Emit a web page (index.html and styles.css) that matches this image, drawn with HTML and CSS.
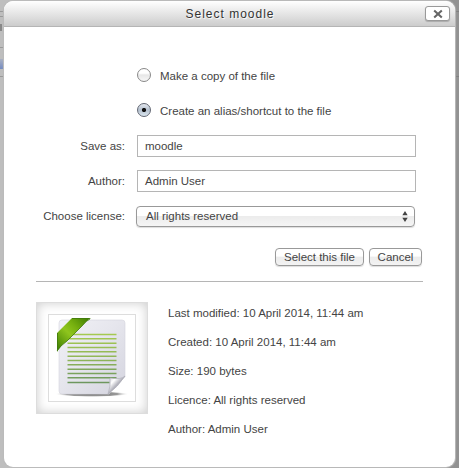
FILE: index.html
```
<!DOCTYPE html>
<html lang="en">
<head>
<meta charset="utf-8">
<title>Select moodle</title>
<link rel="stylesheet" href="styles.css">
</head>
<body>
<div class="backdrop backdrop-left"><i class="line"></i><i class="line second"></i><i class="mark"></i><i class="line third"></i><i class="band"></i><i class="line"></i></div>
<div class="backdrop backdrop-right"><i class="line"></i><i class="line fourth"></i></div>
<main class="dialog">
  <header class="header">
    <h1 class="title">Select moodle</h1>
    <button class="close" aria-label="Close"><svg width="10" height="10" viewBox="0 0 10 10"><path d="M1.2 1.5 8.8 8.5M8.8 1.5 1.2 8.5"/></svg></button>
  </header>
  <form class="form">
    <label class="choice"><span class="radio"></span><span>Make a copy of the file</span></label>
    <label class="choice"><span class="radio radio-on"></span><span>Create an alias/shortcut to the file</span></label>
    <div class="row"><span class="label">Save as:</span><div class="field">moodle</div></div>
    <div class="row"><span class="label">Author:</span><div class="field">Admin User</div></div>
    <div class="row"><span class="label">Choose license:</span><div class="select"><span>All rights reserved</span><svg width="6" height="11" viewBox="0 0 6 11"><path d="M3 0 5.7 4.3H.3ZM.3 6.7H5.7L3 11Z"/></svg></div></div>
    <div class="actions"><button type="button" class="button confirm">Select this file</button><button type="button" class="button cancel">Cancel</button></div>
  </form>
  <section class="info">
    <div class="thumb"><div class="frame">
      <svg width="86" height="86" viewBox="0 0 86 86">
        <defs>
          <linearGradient id="paper" x1="0" y1="0" x2="1" y2="1"><stop offset="0" stop-color="#f1f1f6"/><stop offset=".45" stop-color="#e6e6ed"/><stop offset="1" stop-color="#d4d4df"/></linearGradient>
          <linearGradient id="ribbon" gradientUnits="userSpaceOnUse" x1="8" y1="36" x2="41" y2="3"><stop offset="0" stop-color="#397a00"/><stop offset=".45" stop-color="#8fc51d"/><stop offset=".65" stop-color="#76b00f"/><stop offset="1" stop-color="#3b7900"/></linearGradient>
          <linearGradient id="rules" gradientUnits="userSpaceOnUse" x1="0" y1="19" x2="0" y2="69"><stop offset="0" stop-color="#a5c950"/><stop offset=".5" stop-color="#8fb558"/><stop offset="1" stop-color="#6b955f"/></linearGradient>
          <linearGradient id="curl" x1="0" y1="0" x2="1" y2="1"><stop offset="0" stop-color="#c4c4ce"/><stop offset=".3" stop-color="#fff"/><stop offset=".5" stop-color="#b4b4bd"/></linearGradient>
          <radialGradient id="shade"><stop offset="0" stop-color="#777"/><stop offset=".7" stop-color="#999"/><stop offset="1" stop-color="#fff" stop-opacity="0"/></radialGradient>
        </defs>
        <ellipse cx="43" cy="79" rx="37" ry="3" fill="url(#shade)"/>
        <path d="M13 5H73Q76 5 76 8V62Q68 68 60 79H13Q10 79 10 76V8Q10 5 13 5Z" fill="url(#paper)" stroke="#d5d5de" stroke-width=".6"/>
        <path d="M18.500 19.500H67.500M18.500 23.800H67.500M18.500 28.200H67.500M18.500 32.500H67.500M18.500 36.800H67.500M18.500 41.200H67.500M18.500 45.500H67.500M18.500 49.800H67.500M18.500 54.200H67.500M18.500 58.500H67.500M18.500 62.800H67.500M18.500 67.500H60.500" fill="none" stroke="url(#rules)" stroke-width="1.4"/>
        <path d="M76 61Q72 65 61 63Q62 71 59 79Q69 72 76 61Z" fill="url(#curl)" stroke="#aaaab4" stroke-width=".6"/>
        <path d="M23 3H42Q38 5 33 11L18 26Q11 31 8 37V18Z" fill="url(#ribbon)"/>
        <path d="M23 3.500H40M8.500 18V35M41 4Q38 5 33 11L18 26Q11 31 8 36" fill="none" stroke="#3f780c" stroke-width=".8"/>
      </svg>
    </div></div>
    <div class="details"><p>Last modified: 10 April 2014, 11:44 am</p><p>Created: 10 April 2014, 11:44 am</p><p>Size: 190 bytes</p><p>Licence: All rights reserved</p><p>Author: Admin User</p></div>
  </section>
</main>
</body>
</html>
```
FILE: styles.css
```
* { box-sizing: border-box; }
body {
  position: relative;
  margin: 0;
  width: 459px;
  height: 468px;
  padding: 1px 10px 1px 4px;
  overflow: hidden;
  background: linear-gradient(90deg, #bebebe 0 4px, #b9b9b9 50%, #929292 456px);
  font: 11.5px/14px "Liberation Sans", Arial, sans-serif;
  color: #444;
}
.backdrop { position: absolute; }
.backdrop-left { left: 0; top: 11px; width: 3px; }
.backdrop-right { right: 0; top: 11px; width: 3px; }
.line { display: block; height: 1px; background: #999; }
.second { margin-top: 4px; }
.third { margin-top: 16px; }
.fourth { margin-top: 64px; }
.backdrop-right .line { background: #808080; }
.mark { display: block; width: 2px; height: 7px; margin-top: 7px; background: #888; }
.band { display: block; height: 10px; margin: 11px 0 7px; background: linear-gradient(#aab1c3, #748bc0); }
.dialog {
  position: relative;
  width: 451px;
  height: 466px;
  overflow: hidden;
  border-radius: 9px;
  background: #fff;
  box-shadow: 0 0 1px 1px #bbb;
}
.header {
  display: flex;
  align-items: center;
  height: 26px;
  padding: 0 5px 0 31px;
  border-bottom: 1px solid #b5b5b5;
  background: linear-gradient(#fff, #ccc);
}
.title {
  flex: 1;
  margin: 0;
  text-align: center;
  font-size: 12px;
  font-weight: 400;
  letter-spacing: 1px;
  color: #333;
  text-shadow: 1px 1px 1px #fff;
}
.close {
  display: flex;
  align-items: center;
  justify-content: center;
  width: 25px;
  height: 15px;
  padding: 0;
  border: 1px solid #999;
  border-radius: 3px;
  background: #fff;
  box-shadow: 0 1px 1px #aaa;
}
.close path { fill: none; stroke: #666; stroke-width: 2.1; }
.form {
  width: 387px;
  height: 255px;
  margin-left: 32px;
  padding-top: 31px;
  border-bottom: 1px solid #b5b5b5;
}
.choice {
  display: flex;
  align-items: center;
  gap: 9px;
  height: 35px;
  padding-left: 101px;
}
.radio {
  width: 14px;
  height: 14px;
  border: 1px solid #888;
  border-radius: 50%;
  background: linear-gradient(#fff 35%, #e7e7e7 50%, #f7f7f7);
}
.radio-on {
  border-color: #626773;
  background: radial-gradient(circle at 50% 50%, #111 0 1.8px, transparent 2.4px), linear-gradient(#e5e9f0, #b3bfcd 50%, #dce8f1);
}
.choice .radio { margin-top: -1px; }
.row { display: flex; align-items: center; height: 35px; }
.label { width: 89px; margin-right: 12px; text-align: right; white-space: nowrap; }
.field {
  width: 279px;
  height: 22px;
  padding: 3px 7px;
  border: 1px solid #b5b5b5;
}
.select {
  display: flex;
  align-items: center;
  justify-content: space-between;
  width: 279px;
  height: 21px;
  margin: 1px 0 0 -1px;
  padding: 0 6px 0 9px;
  border: 1px solid #999;
  border-radius: 4px;
  background: linear-gradient(#fff 45%, #ececec 50%, #f5f5f5);
  box-shadow: 0 1px 1px #ddd;
}
.select path { fill: #444; }
.actions { display: flex; justify-content: flex-end; gap: 5px; padding: 15px 1px 0 0; }
.button {
  height: 18px;
  padding: 0 0 1px;
  border: 1px solid #999;
  border-radius: 4px;
  background: linear-gradient(#fff 45%, #ececec 50%, #f3f3f3);
  box-shadow: 0 1px 1px #ddd;
  font: inherit;
  color: inherit;
}
.confirm { width: 89px; }
.cancel { width: 53px; }
.info { display: flex; gap: 20px; margin: 20px 0 0 32px; }
.thumb {
  width: 112px;
  height: 112px;
  padding: 11px;
  border: 1px solid #ddd;
  background: #fff;
  box-shadow: inset 0 0 11px #ccc;
}
.frame { width: 88px; height: 88px; border: 1px solid #ddd; background: #fff; }
.frame svg { display: block; }
.details { padding-top: 4px; }
.details p { margin: 0 0 15px; }
```
